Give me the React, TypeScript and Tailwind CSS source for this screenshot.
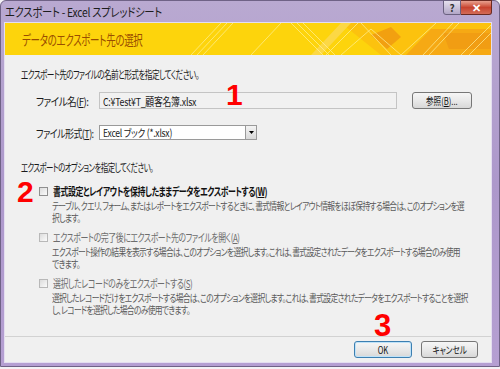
import React from "react";

const U = ({ c }: { c: string }) => <span className="underline">{c}</span>;

const Check = ({ disabled }: { disabled?: boolean }) => (
  <span
    className={
      "block shrink-0 w-[9px] h-[9px] border bg-gradient-to-br from-[#dcdcdc] to-[#fbfbfb] " +
      (disabled ? "border-[#b8b8b8]" : "border-[#8f8f8f]")
    }
  />
);

const Option = ({
  label,
  desc,
  bold,
  disabled,
}: {
  label: React.ReactNode;
  desc: string[];
  bold?: boolean;
  disabled?: boolean;
}) => (
  <div className="flex flex-col">
    <div className="flex items-center h-[14px] pl-[34px] gap-[5px]">
      <Check disabled={disabled} />
      <span
        className={
          "block origin-left scale-x-[0.72] whitespace-nowrap text-[11px] leading-[14px] tracking-[-0.6px] " +
          (bold ? "font-bold text-[#111]" : "text-[#6d6d6d]")
        }
      >
        {label}
      </span>
    </div>
    <div className="mt-[2px] pl-[47px] text-[10px] leading-[12px] tracking-[-0.9px] text-[#5a5a5a]">
      {desc.map((d, i) => (
        <div key={i} className="whitespace-nowrap origin-left scale-x-[0.78]">
          {d}
        </div>
      ))}
    </div>
  </div>
);

const Banner = () => (
  <div className="relative h-[32px] shrink-0 bg-[#fdd40c] flex items-center pl-[17px] overflow-hidden">
    <svg className="absolute right-0 top-0" width="300" height="32" viewBox="0 0 300 32">
      <polygon points="150,0 300,0 300,32 190,32" fill="#fcc20e" />
      <polygon points="215,32 240,6 300,6 300,32" fill="#f6a914" />
      <polygon points="180,12 200,4 210,14 196,26" fill="#f2a010" />
      <polygon points="252,10 300,10 300,26 258,26" fill="#f19d13" />
      <polygon points="120,32 150,0 160,0 130,32" fill="#fcd845" />
      <g stroke="#fff3a0" strokeWidth="0.8" opacity="0.85">
        <line x1="0" y1="32" x2="30" y2="0" />
        <line x1="6" y1="32" x2="36" y2="0" />
        <line x1="12" y1="32" x2="42" y2="0" />
        <line x1="60" y1="32" x2="90" y2="0" />
        <line x1="100" y1="0" x2="132" y2="32" />
        <line x1="106" y1="0" x2="138" y2="32" />
        <line x1="112" y1="0" x2="144" y2="32" />
        <line x1="150" y1="32" x2="180" y2="6" />
        <line x1="180" y1="6" x2="210" y2="32" />
        <line x1="135" y1="32" x2="167" y2="0" />
        <line x1="170" y1="0" x2="200" y2="32" />
        <line x1="210" y1="32" x2="245" y2="0" />
        <line x1="232" y1="32" x2="262" y2="0" />
        <line x1="238" y1="32" x2="268" y2="0" />
        <line x1="270" y1="32" x2="300" y2="2" />
        <line x1="278" y1="32" x2="300" y2="10" />
      </g>
    </svg>
    <span className="relative block origin-left scale-x-[0.7] whitespace-nowrap text-[13.5px] tracking-[-0.4px] text-[#9a4d00]">
      データのエクスポート先の選択
    </span>
  </div>
);

const Btn = ({ children, def }: { children: React.ReactNode; def?: boolean }) => (
  <div
    className={
      "h-[17px] flex items-center justify-center rounded-[3px] border bg-gradient-to-b from-[#f6f6f6] via-[#e9e9e9] to-[#d8d8d8] text-[10px] text-[#111] " +
      (def ? "border-[#3c7fb1] shadow-[inset_0_0_0_1px_#bfe2f8]" : "border-[#777]")
    }
  >
    <span className="block whitespace-nowrap scale-x-[0.76]">{children}</span>
  </div>
);

export default function App() {
  return (
    <div className="relative w-[500px] h-[369px] bg-[#f4f2f6] overflow-hidden font-['Noto_Sans_CJK_JP',sans-serif] [font-feature-settings:'palt']">
      <div className="h-[367px] flex flex-col rounded-t-[6px] border border-[#6f6286] bg-gradient-to-b from-[#b9a9d1] via-[#ad98cb] to-[#b59fd2] pl-[4px] pr-[7px] pb-[3px]">
        {/* title bar */}
        <div className="h-[21px] shrink-0 flex items-start justify-between">
          <span className="mt-[3px] block origin-left scale-x-[0.86] whitespace-nowrap text-[12px] leading-[16px] tracking-[-0.3px] text-[#1d1d1d]">
            エクスポート - Excel スプレッドシート
          </span>
          <div className="flex -mt-px">
            <div className="w-[18px] h-[15px] flex items-center justify-center border border-[#6b6180] rounded-bl-[3px] bg-gradient-to-b from-[#e6e0ee] to-[#b2a6c6] text-[10px] font-bold text-[#333]">
              ?
            </div>
            <div className="w-[31px] h-[15px] flex items-center justify-center border border-l-0 border-[#6b2a22] rounded-br-[3px] bg-gradient-to-b from-[#e8a08f] via-[#c8432f] to-[#d36b57] text-[11px] font-bold text-white">
              ✕
            </div>
          </div>
        </div>

        {/* client area */}
        <div className="flex-1 flex flex-col bg-[#f0f0f0] border border-[#e4def0] -ml-px overflow-hidden">
          <Banner />

          <div className="flex-1 flex flex-col pt-[12px]">
            <div className="flex items-center h-[14px] pl-[16px]">
              <span className="block origin-left scale-x-[0.7] whitespace-nowrap text-[11px] leading-[14px] tracking-[-0.9px] text-[#1a1a1a]">
                エクスポート先のファイルの名前と形式を指定してください。
              </span>
            </div>

            <div className="mt-[11px] flex items-center h-[17px]">
              <div className="w-[94px] shrink-0 pl-[31px] flex items-center">
                <span className="block origin-left scale-x-[0.88] whitespace-nowrap text-[11px] leading-[14px] tracking-[-0.7px] text-[#1a1a1a]">
                  ファイル名(<U c="F" />):
                </span>
              </div>
              <div className="w-[298px] shrink-0 h-[17px] border border-[#c4c4c4] bg-[#f1f1f1] flex items-center pl-[3px]">
                <span className="block origin-left scale-x-[0.8] whitespace-nowrap text-[11px] leading-[14px] tracking-[-0.3px] text-[#1a1a1a]">
                  C:¥Test¥T_顧客名簿.xlsx
                </span>
              </div>
              <div className="ml-[15px] w-[60px] shrink-0">
                <Btn>
                  参照(<U c="B" />)...
                </Btn>
              </div>
            </div>

            <div className="mt-[16px] flex items-center h-[15px]">
              <div className="w-[94px] shrink-0 pl-[31px] flex items-center">
                <span className="block origin-left scale-x-[0.82] whitespace-nowrap text-[11px] leading-[14px] tracking-[-0.7px] text-[#1a1a1a]">
                  ファイル形式(<U c="T" />):
                </span>
              </div>
              <div className="w-[158px] shrink-0 h-[15px] border border-[#9a9a9a] bg-white flex items-center">
                <span className="flex-1 pl-[3px] flex items-center">
                  <span className="block origin-left scale-x-[0.82] whitespace-nowrap text-[10.5px] leading-[13px] tracking-[-0.3px] text-[#1a1a1a]">
                    Excel ブック (*.xlsx)
                  </span>
                </span>
                <span className="w-[11px] h-[13px] border-l border-[#9a9a9a] bg-gradient-to-b from-[#f4f4f4] to-[#d9d9d9] flex items-center justify-center">
                  <svg width="5" height="3" viewBox="0 0 5 3">
                    <polygon points="0,0 5,0 2.5,3" fill="#000" />
                  </svg>
                </span>
              </div>
            </div>

            <div className="mt-[20px] flex items-center h-[14px] pl-[16px]">
              <span className="block origin-left scale-x-[0.68] whitespace-nowrap text-[11px] leading-[14px] tracking-[-0.9px] text-[#1a1a1a]">
                エクスポートのオプションを指定してください。
              </span>
            </div>

            <div className="mt-[10px] flex flex-col gap-[6px]">
              <Option
                bold
                label={
                  <>
                    書式設定とレイアウトを保持したままデータをエクスポートする(<U c="W" />)
                  </>
                }
                desc={[
                  "テーブル、クエリ、フォーム、またはレポートをエクスポートするときに、書式情報とレイアウト情報をほぼ保持する場合は、このオプションを選",
                  "択します。",
                ]}
              />
              <Option
                disabled
                label={
                  <>
                    エクスポートの完了後にエクスポート先のファイルを開く(<U c="A" />)
                  </>
                }
                desc={[
                  "エクスポート操作の結果を表示する場合は、このオプションを選択します。これは、書式設定されたデータをエクスポートする場合のみ使用",
                  "できます。",
                ]}
              />
              <Option
                disabled
                label={
                  <>
                    選択したレコードのみをエクスポートする(<U c="S" />)
                  </>
                }
                desc={[
                  "選択したレコードだけをエクスポートする場合は、このオプションを選択します。これは、書式設定されたデータをエクスポートすることを選択",
                  "し、レコードを選択した場合のみ使用できます。",
                ]}
              />
            </div>
          </div>

          {/* footer */}
          <div className="h-[26px] shrink-0 border-t border-[#d2d2d2] flex justify-end gap-[9px] pt-[4px] pr-[13px]">
            <div className="w-[58px]">
              <Btn def>OK</Btn>
            </div>
            <div className="w-[57px]">
              <Btn>キャンセル</Btn>
            </div>
          </div>
        </div>
      </div>

      {/* red annotation numbers */}
      <span className="absolute left-[226px] top-[80px] font-['Liberation_Sans',sans-serif] font-bold text-[30px] leading-[30px] text-[#ff0000]">
        1
      </span>
      <span className="absolute left-[17px] top-[177px] font-['Liberation_Sans',sans-serif] font-bold text-[30px] leading-[30px] text-[#ff0000]">
        2
      </span>
      <span className="absolute left-[374px] top-[310px] font-['Liberation_Sans',sans-serif] font-bold text-[31px] leading-[31px] text-[#ff0000]">
        3
      </span>
    </div>
  );
}
